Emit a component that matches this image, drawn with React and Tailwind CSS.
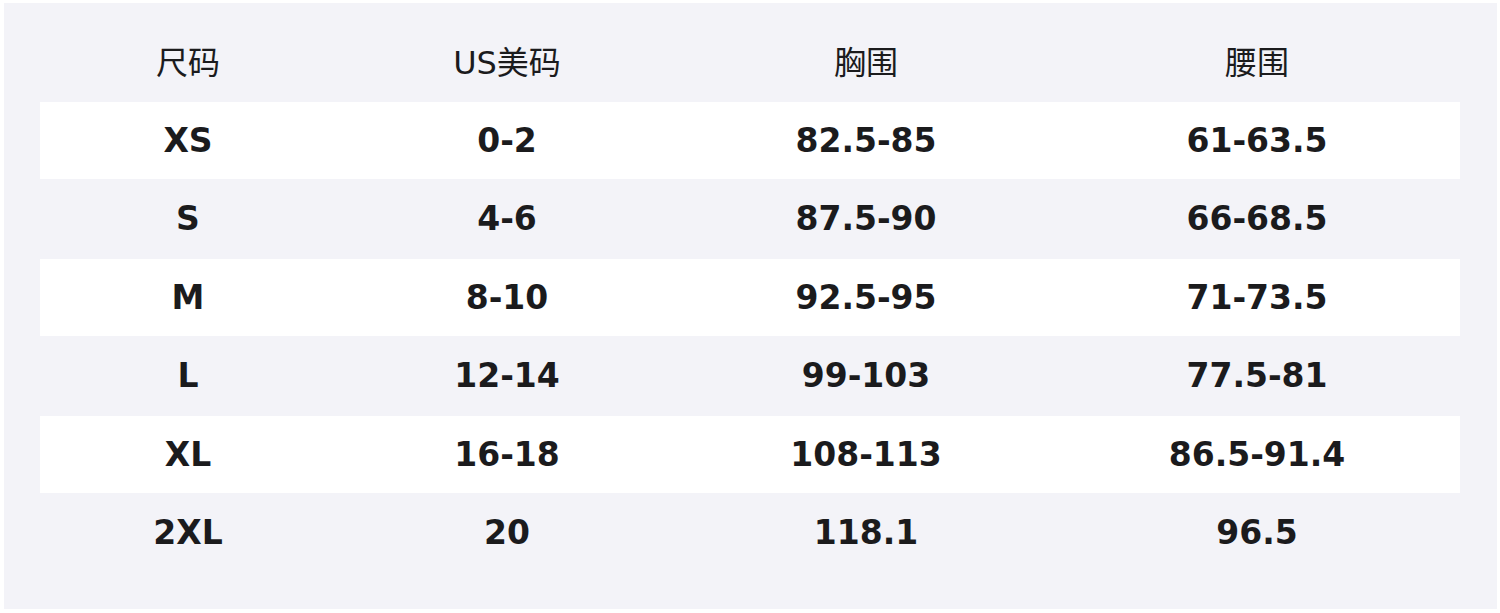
const rows = [
  ["XS", "0-2", "82.5-85", "61-63.5"],
  ["S", "4-6", "87.5-90", "66-68.5"],
  ["M", "8-10", "92.5-95", "71-73.5"],
  ["L", "12-14", "99-103", "77.5-81"],
  ["XL", "16-18", "108-113", "86.5-91.4"],
  ["2XL", "20", "118.1", "96.5"],
];

const cols = "grid grid-cols-[296px_342px_376px_406px]";

export default function App() {
  return (
    <main className="h-[613px] w-[1500px] bg-white pt-[3px] pb-[4px] pl-[4px] pr-[3px] font-['DejaVu_Sans','Noto_Sans_CJK_SC',sans-serif] text-[#1b1b1d]">
      <div className="h-full bg-[#f3f3f8] pt-[20px] pl-[36px] pr-[37px]">
        <div className={`${cols} h-[79px] items-center text-[32px]`}>
          {["尺码", "US美码", "胸围", "腰围"].map((h) => (
            <div key={h} className="text-center">{h}</div>
          ))}
        </div>
        {rows.map((r, i) => (
          <div key={r[0]} className={`${cols} items-center text-[33px] font-bold ${i % 2 === 0 ? "h-[77px] bg-white" : "h-[80px]"}`}>
            {r.map((c, j) => (
              <div key={j} className="text-center">{c}</div>
            ))}
          </div>
        ))}
      </div>
    </main>
  );
}
